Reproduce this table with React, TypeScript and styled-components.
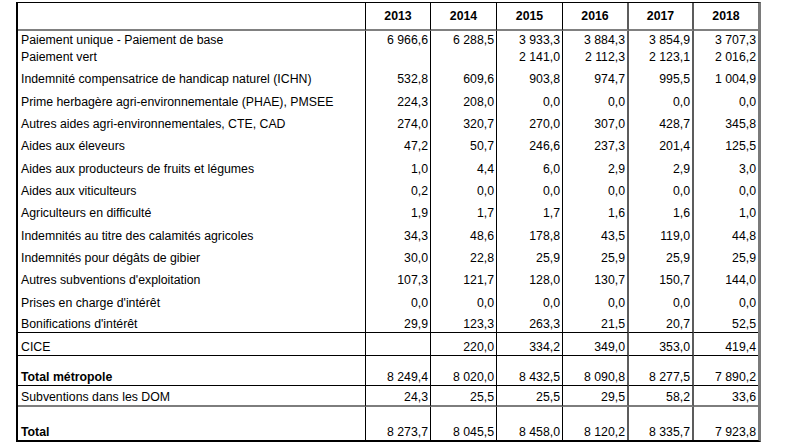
import React from 'react';
import styled, { createGlobalStyle } from 'styled-components';

const GlobalStyle = createGlobalStyle`
  html, body {
    margin: 0;
    background: #fff;
  }
  body {
    font-family: "Liberation Sans", Arial, sans-serif;
    color: #000;
  }
`;

type Rule = 'none' | 'thin' | 'grey';

type Line = {
  label: string;
  values: string[];
  h: number;
  bold?: boolean;
  rule?: Rule;
};

const years = ['2013', '2014', '2015', '2016', '2017', '2018'];
const labelWidth = 348;
const colWidths = [65, 66, 66, 66, 65, 64];

// thousands separators must not wrap
const nb = (s: string) => s.replace(/ /g, '\u00a0');

const rows: Line[] = [
  { label: 'Paiement unique - Paiement de base', values: ['6 966,6', '6 288,5', '3 933,3', '3 884,3', '3 854,9', '3 707,3'], h: 17 },
  { label: 'Paiement vert', values: ['', '', '2 141,0', '2 112,3', '2 123,1', '2 016,2'], h: 17 },
  { label: 'Indemnité compensatrice de handicap naturel (ICHN)', values: ['532,8', '609,6', '903,8', '974,7', '995,5', '1 004,9'], h: 22 },
  { label: 'Prime herbagère agri-environnementale (PHAE), PMSEE', values: ['224,3', '208,0', '0,0', '0,0', '0,0', '0,0'], h: 23 },
  { label: 'Autres aides agri-environnementales, CTE, CAD', values: ['274,0', '320,7', '270,0', '307,0', '428,7', '345,8'], h: 22 },
  { label: 'Aides aux éleveurs', values: ['47,2', '50,7', '246,6', '237,3', '201,4', '125,5'], h: 22 },
  { label: 'Aides aux producteurs de fruits et légumes', values: ['1,0', '4,4', '6,0', '2,9', '2,9', '3,0'], h: 23 },
  { label: 'Aides aux viticulteurs', values: ['0,2', '0,0', '0,0', '0,0', '0,0', '0,0'], h: 22 },
  { label: 'Agriculteurs en difficulté', values: ['1,9', '1,7', '1,7', '1,6', '1,6', '1,0'], h: 22 },
  { label: 'Indemnités au titre des calamités agricoles', values: ['34,3', '48,6', '178,8', '43,5', '119,0', '44,8'], h: 23 },
  { label: 'Indemnités pour dégâts de gibier', values: ['30,0', '22,8', '25,9', '25,9', '25,9', '25,9'], h: 22 },
  { label: "Autres subventions d'exploitation", values: ['107,3', '121,7', '128,0', '130,7', '150,7', '144,0'], h: 22 },
  { label: "Prises en charge d'intérêt", values: ['0,0', '0,0', '0,0', '0,0', '0,0', '0,0'], h: 23 },
  { label: "Bonifications d'intérêt", values: ['29,9', '123,3', '263,3', '21,5', '20,7', '52,5'], h: 22, rule: 'thin' },
  { label: 'CICE', values: ['', '220,0', '334,2', '349,0', '353,0', '419,4'], h: 23, rule: 'thin' },
  { label: 'Total métropole', values: ['8 249,4', '8 020,0', '8 432,5', '8 090,8', '8 277,5', '7 890,2'], h: 30, bold: true, rule: 'thin' },
  { label: 'Subventions dans les DOM', values: ['24,3', '25,5', '25,5', '29,5', '58,2', '33,6'], h: 21, rule: 'grey' },
  { label: 'Total', values: ['8 273,7', '8 045,5', '8 458,0', '8 120,2', '8 335,7', '7 923,8'], h: 33, bold: true },
];

const ruleCss = (rule?: Rule) => {
  if (rule === 'thin') return '1px solid #000';
  if (rule === 'grey') return '2px solid #7d7d7d';
  return 'none';
};

// column separators: the last two inner ones are drawn heavier
const sepCss = (i: number) => {
  if (i < 3) return '1px solid #000';
  if (i < 5) return '2px solid #5c5c5c';
  return 'none';
};

const Page = styled.div`
  padding: 2px 0 0 16px;
`;

const Sheet = styled.table`
  table-layout: fixed;
  border-collapse: separate;
  border-spacing: 0;
  width: 745px;
  border-left: 2px solid #000;
  border-top: 1px solid #000;
  border-right: 3px solid #7a7a7a;
  border-bottom: 2px solid #000;
  font-size: 12.3px;
  line-height: 14px;
`;

const HeadRow = styled.tr`
  height: 28px;
`;

const HeadCell = styled.th<{ $sep: string }>`
  padding: 0;
  font-weight: bold;
  text-align: center;
  vertical-align: middle;
  border-bottom: 2px solid #808080;
  border-right: ${(p) => p.$sep};
`;

const Row = styled.tr<{ $h: number }>`
  height: ${(p) => p.$h}px;
`;

const LabelCell = styled.td<{ $bold?: boolean; $rule?: Rule }>`
  padding: 0 0 1px 3px;
  vertical-align: bottom;
  white-space: nowrap;
  overflow: hidden;
  font-weight: ${(p) => (p.$bold ? 'bold' : 'normal')};
  border-right: 1px solid #000;
  border-bottom: ${(p) => ruleCss(p.$rule)};
`;

const NumCell = styled.td<{ $sep: string; $rule?: Rule }>`
  padding: 0 2px 1px 0;
  text-align: right;
  vertical-align: bottom;
  white-space: nowrap;
  border-right: ${(p) => p.$sep};
  border-bottom: ${(p) => ruleCss(p.$rule)};
`;

export default function App() {
  return (
    <Page>
      <GlobalStyle />
      <Sheet>
        <colgroup>
          <col style={{ width: labelWidth }} />
          {colWidths.map((w, i) => (
            <col key={i} style={{ width: w }} />
          ))}
        </colgroup>
        <thead>
          <HeadRow>
            <HeadCell $sep="1px solid #000" />
            {years.map((y, i) => (
              <HeadCell key={y} $sep={sepCss(i)}>
                {y}
              </HeadCell>
            ))}
          </HeadRow>
        </thead>
        <tbody>
          {rows.map((r) => (
            <Row key={r.label} $h={r.h}>
              <LabelCell $bold={r.bold} $rule={r.rule}>
                {r.label}
              </LabelCell>
              {r.values.map((v, i) => (
                <NumCell key={i} $sep={sepCss(i)} $rule={r.rule}>
                  {nb(v)}
                </NumCell>
              ))}
            </Row>
          ))}
        </tbody>
      </Sheet>
    </Page>
  );
}
